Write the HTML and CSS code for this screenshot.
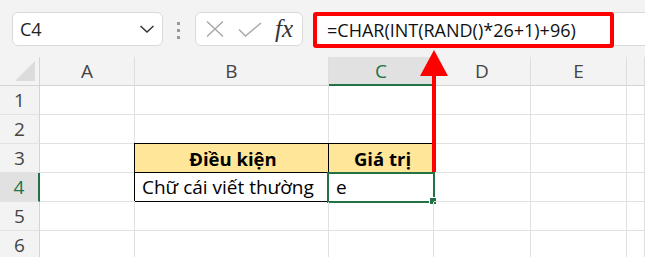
FILE: index.html
```html
<!DOCTYPE html>
<html lang="vi">
<head>
    <meta charset="UTF-8">
    <title>CHAR RAND</title>
    <link rel="stylesheet" href="styles.css">
</head>
<body>
<div class="app">
    <div class="toolbar">
        <div class="namebox">
            <span class="name">C4</span>
            <svg class="chev" width="16" height="10" viewBox="0 0 16 10"><path d="M1.5 2 L8 8 L14.5 2" fill="none" stroke="#333" stroke-width="1.5"/></svg>
        </div>
        <div class="grip"><i></i><i></i><i></i></div>
        <div class="fxbox">
            <svg width="18" height="16" viewBox="0 0 18 16"><path d="M1 0.5 L17 15.5 M17 0.5 L1 15.5" stroke="#a6a6a6" stroke-width="1.4" fill="none"/></svg>
            <svg class="ok" width="24" height="15" viewBox="0 0 24 15"><path d="M1 7.5 L7.5 14 L23 1" stroke="#a6a6a6" stroke-width="1.4" fill="none"/></svg>
            <span class="fx">fx</span>
        </div>
        <div class="formula">
            <div class="formula-text">=CHAR(INT(RAND()*26+1)+96)</div>
        </div>
    </div>

    <div class="sheet">
        <div class="corner"></div>
        <div class="colh">A</div>
        <div class="colh">B</div>
        <div class="colh sel">C</div>
        <div class="colh">D</div>
        <div class="colh">E</div>
        <div class="colh"></div>

        <div class="rowh">1</div>
        <div class="cell"></div><div class="cell"></div><div class="cell"></div><div class="cell"></div><div class="cell"></div><div class="cell"></div>

        <div class="rowh">2</div>
        <div class="cell"></div><div class="cell"></div><div class="cell"></div><div class="cell"></div><div class="cell"></div><div class="cell"></div>

        <div class="rowh">3</div>
        <div class="cell"></div>
        <div class="cell tb head">Điều kiện</div>
        <div class="cell tb head">Giá trị</div>
        <div class="cell"></div><div class="cell"></div><div class="cell"></div>

        <div class="rowh sel">4</div>
        <div class="cell"></div>
        <div class="cell tb">Chữ cái viết thường</div>
        <div class="cell tb active">e</div>
        <div class="cell"></div><div class="cell"></div><div class="cell"></div>

        <div class="rowh">5</div>
        <div class="cell"></div><div class="cell"></div><div class="cell"></div><div class="cell"></div><div class="cell"></div><div class="cell"></div>

        <div class="rowh">6</div>
        <div class="cell"></div><div class="cell"></div><div class="cell"></div><div class="cell"></div><div class="cell"></div><div class="cell"></div>
    </div>

    <!-- chú thích: mũi tên chỉ từ ô C4 lên thanh công thức -->
    <div class="arrow"><span class="head-tri"></span><span class="shaft"></span></div>
</div>
</body>
</html>
```

FILE: styles.css
```css
*{
    margin:0;padding:0;box-sizing:border-box;
}
body{
    width:645px;height:257px;overflow:hidden;
    background:#f3f3f3;
    font-family:"Open Sans","Liberation Sans",sans-serif;
}
.app{
    position:relative;
    width:645px;height:257px;overflow:hidden;
}
.toolbar{
    display:flex;
    align-items:flex-start;
    height:57px;
    padding:12px 0 0 12px;
}
.namebox{
    display:flex;
    align-items:center;
    justify-content:space-between;
    width:151px;height:34px;
    padding:0 7px 0 7px;
    background:#fff;
    border:1px solid #dadada;
    border-radius:6px;
}
.name{
    font-size:18px;
    color:#222;
}
.grip{
    display:flex;
    flex-direction:column;
    gap:4px;
    margin:10px 0 0 14px;
}
.grip i{
    display:block;
    width:3px;height:3px;
    background:#999;
}
.fxbox{
    display:flex;
    align-items:center;
    width:108px;height:34px;
    margin-left:15px;
    padding:0 0 0 10px;
    background:#fff;
    border:1px solid #dadada;
    border-radius:6px;
}
.fxbox .ok{margin-left:14px;}
.fx{
    margin:0 0 2px 13px;
    font-family:"Liberation Serif",serif;
    font-style:italic;
    font-size:25px;
    color:#333;
    line-height:1;
}
.formula{
    flex:1;
    height:34px;
    margin-left:10px;
    background:#fff;
    border:1px solid #dadada;
    border-right:none;
    border-radius:6px 0 0 6px;
}
.formula-text{
    width:301px;height:36px;
    margin:-1px 0 0 -1px;
    padding:2px 0 0 10px;
    border:4px solid #f00;
    border-radius:3px;
    background:#fff;
    font-size:18px;
    color:#111;
    line-height:24px;
    white-space:nowrap;
}

.sheet{
    display:grid;
    grid-template-columns:40px 95px 194px 105px 97px 96px 1fr;
    grid-auto-rows:29px;
    background:#fff;
}
.corner{
    position:relative;
    background:#f3f3f3;
    border-right:1px solid #d4d4d4;
    border-bottom:1px solid #d4d4d4;
}
.corner::after{
    content:"";
    position:absolute;
    right:4px;bottom:4px;
    border-style:solid;
    border-width:0 0 20px 20px;
    border-color:transparent transparent #dcdcdc transparent;
}
.colh,.rowh{
    display:flex;
    align-items:center;
    justify-content:center;
    background:#f3f3f3;
    font-size:19px;
    color:#444;
}
.colh{
    border-right:1px solid #dedede;
    border-bottom:1px solid #d4d4d4;
}
.rowh{
    border-right:1px solid #d4d4d4;
    border-bottom:1px solid #e3e3e3;
}
.colh.sel{
    background:#e1e1e1;
    color:#217346;
    border-bottom:2px solid #217346;
}
.rowh.sel{
    background:#e1e1e1;
    color:#217346;
    border-right:2px solid #217346;
}
.cell{
    position:relative;
    display:flex;
    align-items:center;
    padding:0 4px 0 7px;
    border-right:1px solid #e1e1e1;
    border-bottom:1px solid #e1e1e1;
    font-size:19px;
    color:#000;
    white-space:nowrap;
}
.cell.tb{
    border-right-color:#000;
    border-bottom-color:#000;
    box-shadow:-1px -1px 0 #000;
}
.cell.head{
    justify-content:center;
    background:#ffe699;
    font-weight:bold;
    font-size:18.5px;
}
.cell.active::before{
    content:"";
    position:absolute;
    left:-2px;top:-1px;right:-2px;bottom:-2px;
    border:2px solid #217346;
}
.cell.active::after{
    content:"";
    position:absolute;
    right:-4px;bottom:-4px;
    width:6px;height:6px;
    background:#217346;
    border:1px solid #fff;
}

.arrow{
    position:absolute;
    left:420px;top:50px;
    width:28px;
    display:flex;
    flex-direction:column;
    align-items:center;
}
.head-tri{
    width:0;height:0;
    border-left:14px solid transparent;
    border-right:14px solid transparent;
    border-bottom:26px solid #f00;
}
.shaft{
    width:4px;height:96px;
    background:#f00;
}
```
